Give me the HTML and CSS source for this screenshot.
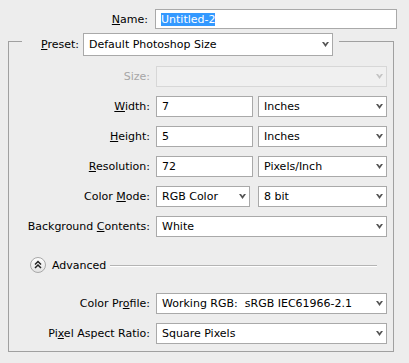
FILE: index.html
```html
<!DOCTYPE html>
<html>
<head>
    <meta charset="UTF-8">
    <title>New</title>
    <link rel="stylesheet" href="styles.css">
</head>
<body>
    <div class="dialog">
        <!-- Document name -->
        <div class="name-row">
            <label class="label"><u>N</u>ame:</label>
            <div class="field name-field"><span class="selected">Untitled-2</span></div>
        </div>

        <!-- Preset group box -->
        <fieldset class="group">
            <legend class="preset">
                <label class="label preset-label"><u>P</u>reset:</label>
                <div class="field select preset-select">
                    <span>Default Photoshop Size</span>
                    <svg class="chevron" width="7" height="5" viewBox="0 0 7 5"><polygon points="0,0 2,0 3.5,2 5,0 7,0 3.5,5"/></svg>
                </div>
            </legend>

            <div class="form">
                <label class="label disabled">Size:</label>
                <div class="field select disabled">
                    <span></span>
                    <svg class="chevron" width="7" height="5" viewBox="0 0 7 5"><polygon points="0,0 2,0 3.5,2 5,0 7,0 3.5,5"/></svg>
                </div>

                <label class="label"><u>W</u>idth:</label>
                <div class="pair">
                    <div class="field input size-input">7</div>
                    <div class="field select unit-select">
                        <span>Inches</span>
                        <svg class="chevron" width="7" height="5" viewBox="0 0 7 5"><polygon points="0,0 2,0 3.5,2 5,0 7,0 3.5,5"/></svg>
                    </div>
                </div>

                <label class="label"><u>H</u>eight:</label>
                <div class="pair">
                    <div class="field input size-input">5</div>
                    <div class="field select unit-select">
                        <span>Inches</span>
                        <svg class="chevron" width="7" height="5" viewBox="0 0 7 5"><polygon points="0,0 2,0 3.5,2 5,0 7,0 3.5,5"/></svg>
                    </div>
                </div>

                <label class="label"><u>R</u>esolution:</label>
                <div class="pair">
                    <div class="field input size-input">72</div>
                    <div class="field select unit-select">
                        <span>Pixels/Inch</span>
                        <svg class="chevron" width="7" height="5" viewBox="0 0 7 5"><polygon points="0,0 2,0 3.5,2 5,0 7,0 3.5,5"/></svg>
                    </div>
                </div>

                <label class="label">Color <u>M</u>ode:</label>
                <div class="pair">
                    <div class="field select mode-select">
                        <span>RGB Color</span>
                        <svg class="chevron" width="7" height="5" viewBox="0 0 7 5"><polygon points="0,0 2,0 3.5,2 5,0 7,0 3.5,5"/></svg>
                    </div>
                    <div class="field select unit-select">
                        <span>8 bit</span>
                        <svg class="chevron" width="7" height="5" viewBox="0 0 7 5"><polygon points="0,0 2,0 3.5,2 5,0 7,0 3.5,5"/></svg>
                    </div>
                </div>

                <label class="label">Background <u>C</u>ontents:</label>
                <div class="field select">
                    <span>White</span>
                    <svg class="chevron" width="7" height="5" viewBox="0 0 7 5"><polygon points="0,0 2,0 3.5,2 5,0 7,0 3.5,5"/></svg>
                </div>

                <!-- Advanced toggle -->
                <div class="advanced">
                    <svg class="toggle" width="16" height="16" viewBox="0 0 16 16">
                        <defs>
                            <linearGradient id="knob" x1="0" y1="0" x2="0" y2="1">
                                <stop offset="0" stop-color="#ffffff"/>
                                <stop offset="1" stop-color="#e2e2e2"/>
                            </linearGradient>
                        </defs>
                        <circle cx="8" cy="8" r="7.5" fill="url(#knob)" stroke="#a8a8a8"/>
                        <polyline points="5,7.5 8,4.5 11,7.5" fill="none" stroke="#222" stroke-width="1.5"/>
                        <polyline points="5,11 8,8 11,11" fill="none" stroke="#222" stroke-width="1.5"/>
                    </svg>
                    <span>Advanced</span>
                    <span class="rule"></span>
                </div>

                <label class="label">Color Pr<u>o</u>file:</label>
                <div class="field select">
                    <span>Working RGB:  sRGB IEC61966-2.1</span>
                    <svg class="chevron" width="7" height="5" viewBox="0 0 7 5"><polygon points="0,0 2,0 3.5,2 5,0 7,0 3.5,5"/></svg>
                </div>

                <label class="label">Pi<u>x</u>el Aspect Ratio:</label>
                <div class="field select">
                    <span>Square Pixels</span>
                    <svg class="chevron" width="7" height="5" viewBox="0 0 7 5"><polygon points="0,0 2,0 3.5,2 5,0 7,0 3.5,5"/></svg>
                </div>
            </div>
        </fieldset>
    </div>
</body>
</html>
```

FILE: styles.css
```css
body {
    margin: 0;
    background: #ededed;
    font-family: "DejaVu Sans", sans-serif;
    font-size: 11px;
    color: #000;
}
.dialog {
    width: 409px;
    padding-top: 9px;
}
.label {
    text-align: right;
    white-space: nowrap;
}
.disabled {
    color: #a6a6a6;
}
.field {
    box-sizing: border-box;
    height: 21px;
    border: 1px solid #a9a9a9;
    background: #fff;
    display: flex;
    align-items: center;
    justify-content: space-between;
    padding: 0 3px 0 5px;
    white-space: pre;
}
.field.disabled {
    border-color: #d7d7d7;
    background: #f0f0f0;
}
.chevron {
    fill: #555;
    flex: none;
}
.disabled .chevron {
    fill: #c4c4c4;
}
.name-row {
    display: grid;
    grid-template-columns: 148px 242px;
    column-gap: 7px;
    align-items: center;
}
.name-field {
    height: 20px;
}
.selected {
    background: #3399ff;
    color: #fff;
}
.group {
    box-sizing: border-box;
    width: 386px;
    margin: -2px 0 0 8px;
    padding: 10px 6px 7px 0;
    border: 1px solid #a0a0a0;
}
.preset {
    display: flex;
    align-items: center;
    gap: 4px;
    margin-left: 13px;
    padding: 6px 6px 0 0;
}
.preset-label {
    width: 57px;
}
.preset-select {
    width: 250px;
    height: 23px;
}
.form {
    display: grid;
    grid-template-columns: 141px 231px;
    column-gap: 6px;
    row-gap: 9px;
    align-items: center;
}
.pair {
    display: flex;
    justify-content: space-between;
}
.size-input {
    width: 97px;
}
.mode-select {
    width: 94px;
}
.unit-select {
    width: 129px;
}
.advanced {
    grid-column: 1 / -1;
    display: flex;
    align-items: center;
    gap: 6px;
    margin: 11px 0 11px;
    padding-left: 21px;
}
.rule {
    flex: 1;
    height: 1px;
    margin: 0 10px 0 -2px;
    background: #b4b4b4;
    box-shadow: 0 1px 0 #fff;
}
```
